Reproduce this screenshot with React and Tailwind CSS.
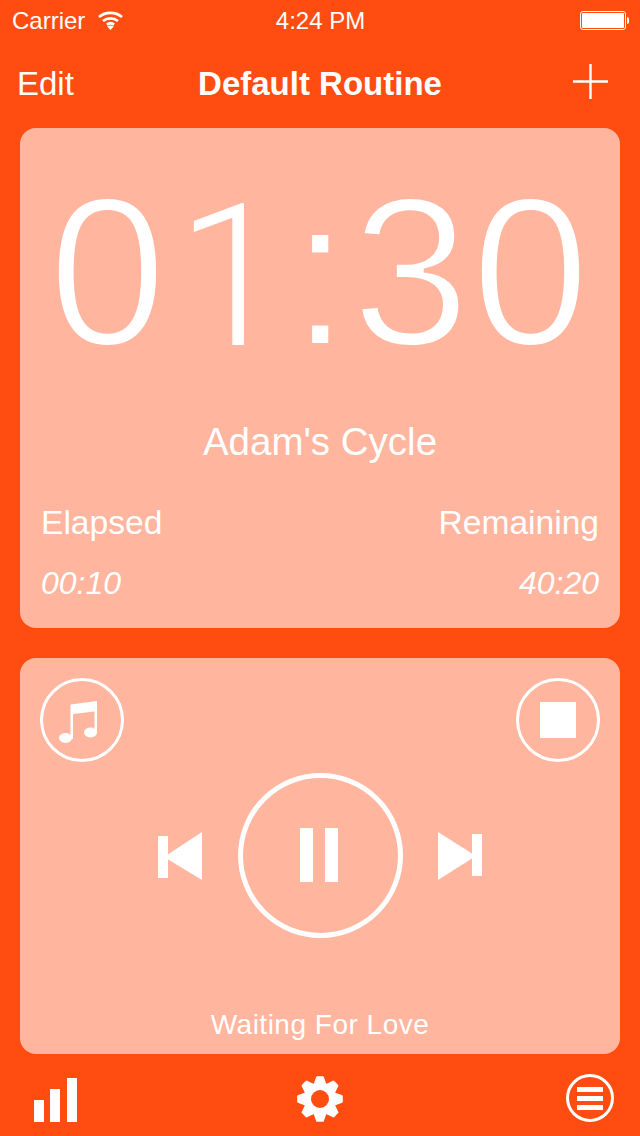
const Wifi = () => (
  <svg width="25" height="19" viewBox="0 0 25 19" fill="none" stroke="white" strokeWidth="2.8">
    <path d="M1 6C7.500 .5 17.500 .5 24 6" />
    <path d="M5 10C9.500 6.500 15.500 6.500 20 10" />
    <path d="M8.800 13.500C11 12 14 12 16.200 13.500" />
    <path d="M12.500 19L9.200 15.500C11.200 14.300 13.800 14.300 15.800 15.500Z" fill="white" stroke="none" />
  </svg>
);

const Battery = () => (
  <div className="flex items-center">
    <div className="w-[46px] h-[19px] border border-white rounded-[3px] p-[1px]">
      <div className="w-full h-full bg-white rounded-[1px]"></div>
    </div>
    <div className="w-[2px] h-[7px] bg-white rounded-r-sm ml-[1px]"></div>
  </div>
);

const Plus = () => (
  <svg width="35" height="35" viewBox="0 0 35 35" stroke="white" strokeWidth="2.4">
    <path d="M17.500 0V35M0 17.500H35" />
  </svg>
);

const Note = () => (
  <svg width="46" height="46" viewBox="0 0 46 46" fill="white">
    <path d="M11.500 7.500L38 4V34H35.500V14.500L14 17V42H11.500Z" />
    <ellipse cx="6.500" cy="41" rx="6.500" ry="5" />
    <ellipse cx="31.500" cy="35.500" rx="6.500" ry="5" />
  </svg>
);

const Prev = () => (
  <svg width="44" height="48" viewBox="0 0 44 48" fill="white">
    <path d="M0 4H10V46H0Z" />
    <path d="M44 0V48L6 25Z" />
  </svg>
);

const Next = () => (
  <svg width="44" height="48" viewBox="0 0 44 48" fill="white">
    <path d="M34 2H44V44H34Z" />
    <path d="M0 0V48L38 24Z" />
  </svg>
);

// eight teeth, built once from angles
const gearPoints = Array.from({ length: 8 }, (_, i) => {
  const a = (i * Math.PI) / 4;
  return [
    [15.5, a - 0.36],
    [22, a - 0.13],
    [22, a + 0.13],
    [15.5, a + 0.36],
  ];
})
  .flat()
  .map(([r, t]) => `${(23 + r * Math.sin(t)).toFixed(2)} ${(23 - r * Math.cos(t)).toFixed(2)}`)
  .join("L");

const Gear = () => (
  <svg width="46" height="46" viewBox="0 0 46 46" fill="white">
    <path
      fillRule="evenodd"
      stroke="white"
      strokeWidth="2"
      strokeLinejoin="round"
      d={`M${gearPoints}ZM23 13A10 10 0 1 0 23 33A10 10 0 1 0 23 13Z`}
    />
  </svg>
);

const Bars = () => (
  <div className="flex items-end ml-2">
    <div className="w-[10px] h-[22px] bg-white"></div>
    <div className="w-[10px] h-[33px] ml-[6px] bg-white"></div>
    <div className="w-[10px] h-[44px] ml-[7px] bg-white"></div>
  </div>
);

const MenuCircle = () => (
  <div className="w-[48px] h-[48px] rounded-full border-[3px] border-white flex flex-col items-center justify-center gap-[4px]">
    <div className="w-[26px] h-[5px] bg-white"></div>
    <div className="w-[26px] h-[5px] bg-white"></div>
    <div className="w-[26px] h-[5px] bg-white"></div>
  </div>
);

export default function App() {
  return (
    <div className="w-[640px] h-[1136px] overflow-hidden bg-[#ff4c11] text-white font-['Liberation_Sans',sans-serif]">
      {/* status bar */}
      <div className="h-10 grid grid-cols-3 items-center pl-3 pr-[11px] text-[24px]">
        <div className="flex items-center gap-[13px]">
          <span className="pt-[1px]">Carrier</span>
          <Wifi />
        </div>
        <div className="text-center pt-[1px]">4:24 PM</div>
        <div className="flex justify-end">
          <Battery />
        </div>
      </div>

      {/* nav bar */}
      <div className="h-[88px] flex items-center justify-between pl-[17px] pr-[32px] relative">
        <span className="text-[33px]">Edit</span>
        <span className="absolute left-0 right-0 text-center text-[33px] font-bold">Default Routine</span>
        <div className="mb-[5px]">
          <Plus />
        </div>
      </div>

      <div className="px-5 flex flex-col gap-[30px]">
        {/* timer card */}
        <div className="h-[500px] bg-[#ffb59e] rounded-2xl flex flex-col items-center px-[21px]">
          <div className="mt-[36px] h-[216px] leading-[216px] text-[212px] tracking-[2px] whitespace-nowrap [-webkit-text-stroke:4px_#ffb59e]">
            0<span className="ml-[8px] font-['Roboto',sans-serif] font-light text-[199px] [-webkit-text-stroke:0]">1</span><span className="ml-[2px]">:</span>30
          </div>
          <div className="mt-[40px] text-[38.500px] leading-[44px]">Adam's Cycle</div>
          <div className="mt-[39px] w-full flex justify-between text-[33.600px] leading-[40px]">
            <span>Elapsed</span>
            <span>Remaining</span>
          </div>
          <div className="mt-[22px] w-full flex justify-between text-[32px] leading-[36px] italic">
            <span>00:10</span>
            <span>40:20</span>
          </div>
        </div>

        {/* player card */}
        <div className="h-[396px] bg-[#ffb59e] rounded-2xl px-5 pt-5 flex flex-col">
          <div className="flex justify-between">
            <div className="w-[84px] h-[84px] rounded-full border-[3px] border-white flex items-center justify-center">
              <Note />
            </div>
            <div className="w-[84px] h-[84px] rounded-full border-[3px] border-white flex items-center justify-center">
              <div className="w-9 h-9 bg-white"></div>
            </div>
          </div>
          <div className="mt-[11px] flex items-center justify-center">
            <Prev />
            <div className="w-[165px] h-[165px] ml-[36px] mr-[35px] pb-[2px] pr-[3px] rounded-full border-[5px] border-white flex items-center justify-center gap-[12px]">
              <div className="w-[13px] h-[54px] bg-white"></div>
              <div className="w-[13px] h-[54px] bg-white"></div>
            </div>
            <Next />
          </div>
          <div className="mt-[70px] text-center text-[28px] leading-[34px] tracking-[0.5px]">Waiting For Love</div>
        </div>
      </div>

      {/* tab bar */}
      <div className="mt-5 h-12 grid grid-cols-3 items-end px-[26px]">
        <Bars />
        <div className="justify-self-center h-[46px]">
          <Gear />
        </div>
        <div className="justify-self-end">
          <MenuCircle />
        </div>
      </div>
    </div>
  );
}
